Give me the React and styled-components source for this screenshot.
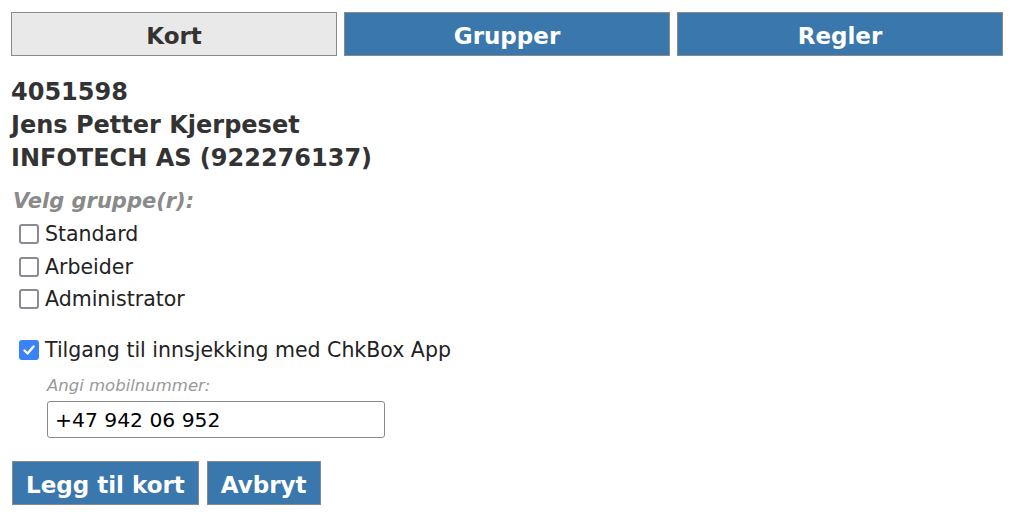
import React, { useState } from "react";
import styled, { createGlobalStyle } from "styled-components";

const GlobalStyle = createGlobalStyle`
  body {
    margin: 0;
    background: #fff;
    font-family: "DejaVu Sans", Verdana, sans-serif;
    color: #333;
  }
`;

const groups = ["Standard", "Arbeider", "Administrator"];

const CheckBox = ({ checked, onChange }) => (
  <BoxWrap checked={checked}>
    <HiddenInput
      type="checkbox"
      checked={checked}
      onChange={e => onChange(e.target.checked)}
    />
    {checked && (
      <svg width="14" height="14" viewBox="0 0 14 14">
        <path
          d="M2.5 7.5 L5.6 10.5 L11.5 3.5"
          fill="none"
          stroke="#fff"
          strokeWidth="2.4"
          strokeLinecap="round"
          strokeLinejoin="round"
        />
      </svg>
    )}
  </BoxWrap>
);

const App = () => {
  const [tab, setTab] = useState("Kort");
  const [checked, setChecked] = useState({});
  const [appAccess, setAppAccess] = useState(true);
  const [phone, setPhone] = useState("+47 942 06 952");

  return (
    <Page>
      <GlobalStyle />
      <Tabs>
        {["Kort", "Grupper", "Regler"].map(name => (
          <Tab key={name} active={tab === name} onClick={() => setTab(name)}>
            {name}
          </Tab>
        ))}
      </Tabs>

      <Info>
        <div>4051598</div>
        <div>Jens Petter Kjerpeset</div>
        <div>INFOTECH AS (922276137)</div>
      </Info>

      <GroupLabel>Velg gruppe(r):</GroupLabel>
      <CheckList>
        {groups.map(g => (
          <CheckRow key={g}>
            <CheckBox
              checked={!!checked[g]}
              onChange={v => setChecked({ ...checked, [g]: v })}
            />
            {g}
          </CheckRow>
        ))}
      </CheckList>

      <AppRow>
        <CheckBox checked={appAccess} onChange={setAppAccess} />
        Tilgang til innsjekking med ChkBox App
      </AppRow>

      <PhoneBlock>
        <PhoneLabel>Angi mobilnummer:</PhoneLabel>
        <PhoneInput value={phone} onChange={e => setPhone(e.target.value)} />
      </PhoneBlock>

      <Actions>
        <ActionButton>Legg til kort</ActionButton>
        <ActionButton>Avbryt</ActionButton>
      </Actions>
    </Page>
  );
};

export default App;

const Page = styled.div`
  padding: 12px 0 0 11px;
  width: 993px;
`;

const Tabs = styled.div`
  display: grid;
  grid-template-columns: repeat(3, 326px);
  gap: 7px;
`;

const Tab = styled.button`
  height: 44px;
  border: 1px solid #8a8a8a;
  background: ${({ active }) => (active ? "#e9e9e9" : "#3a77ad")};
  color: ${({ active }) => (active ? "#333" : "#fff")};
  font-family: "DejaVu Sans", Verdana, sans-serif;
  font-weight: bold;
  font-size: 23px;
  cursor: pointer;
  padding: 3px 0 0;
`;

const Info = styled.div`
  margin-top: 20px;
  font-weight: bold;
  font-size: 24px;
  line-height: 33px;
  color: #333;
`;

const GroupLabel = styled.div`
  margin-top: 12px;
  font-size: 21px;
  font-weight: bold;
  font-style: italic;
  color: #8a8a8a;
  line-height: 28px;
  padding-left: 2px;
`;

const CheckList = styled.div`
  display: flex;
  flex-direction: column;
  margin-top: 3px;
`;

const CheckRow = styled.label`
  display: flex;
  align-items: center;
  height: 32.5px;
  font-size: 20.5px;
  color: #222;
  padding-left: 8px;
`;

const BoxWrap = styled.span`
  position: relative;
  width: 20px;
  height: 20px;
  box-sizing: border-box;
  margin-right: 6px;
  border-radius: 3px;
  border: ${({ checked }) => (checked ? "none" : "2px solid #8c8a95")};
  background: ${({ checked }) => (checked ? "#3a82f7" : "#fff")};
  display: flex;
  align-items: center;
  justify-content: center;
  flex-shrink: 0;
`;

const HiddenInput = styled.input`
  position: absolute;
  inset: 0;
  margin: 0;
  opacity: 0;
  cursor: pointer;
`;

const AppRow = styled(CheckRow)`
  margin-top: 18px;
`;

const PhoneBlock = styled.div`
  padding-left: 36px;
  margin-top: 9px;
  display: flex;
  flex-direction: column;
`;

const PhoneLabel = styled.div`
  font-size: 16.5px;
  font-style: italic;
  color: #999;
  line-height: 22px;
`;

const PhoneInput = styled.input`
  margin-top: 4px;
  width: 338px;
  height: 37px;
  box-sizing: border-box;
  border: 1px solid #8a8a8a;
  border-radius: 3px;
  padding: 0 7px;
  font-family: "DejaVu Sans", Verdana, sans-serif;
  font-size: 20.3px;
  color: #000;
  outline: none;
`;

const Actions = styled.div`
  display: flex;
  gap: 8px;
  margin-top: 23px;
  padding-left: 1px;
`;

const ActionButton = styled.button`
  height: 44px;
  padding: 3px 13px 0;
  border: 1px solid #8a8a8a;
  background: #3a77ad;
  color: #fff;
  font-family: "DejaVu Sans", Verdana, sans-serif;
  font-weight: bold;
  font-size: 23px;
  cursor: pointer;
`;
